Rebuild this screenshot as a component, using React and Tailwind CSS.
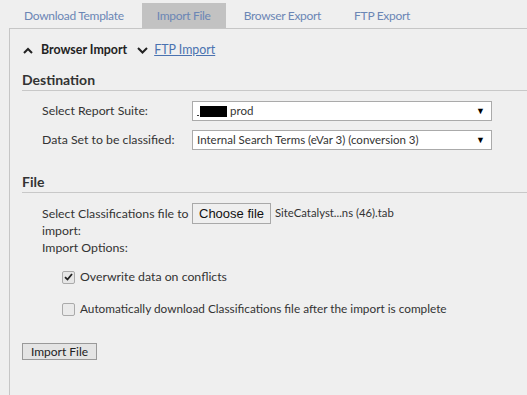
export default function App() {
  const font = { fontFamily: 'Lato, "Open Sans", sans-serif' }
  return (
    <div className="w-[527px] h-[395px] bg-[#efefef] overflow-hidden text-[#333]" style={font}>
      {/* tabs */}
      <div className="flex items-end h-[28px] pl-[9px] gap-[3px] text-[12px] tracking-[-0.3px] text-[#6b86b5]">
        <div className="h-[25px] px-[15px] flex items-center">Download Template</div>
        <div className="h-[25px] px-[15px] flex items-center bg-[#c2c2c2] text-[#6b86b5]">Import File</div>
        <div className="h-[25px] px-[15px] flex items-center">Browser Export</div>
        <div className="h-[25px] px-[15px] flex items-center">FTP Export</div>
      </div>

      <div className="ml-[9px] border-t border-l border-[#c6c6c6] h-[367px] pl-[12px]">
        <div className="flex items-center h-[41px] pt-[1px] text-[12.4px]">
          <svg width="10" height="7" viewBox="0 0 10 7" className="ml-[1px] mr-[8px]">
            <path d="M1 6 L5 2 L9 6" fill="none" stroke="#222" strokeWidth="2" />
          </svg>
          <span className="font-bold text-[#222]">Browser Import</span>
          <svg width="11" height="7" viewBox="0 0 11 7" className="ml-[10px] mr-[6px]">
            <path d="M1 1 L5.5 5.5 L10 1" fill="none" stroke="#222" strokeWidth="2" />
          </svg>
          <span className="underline text-[#4a72b0]">FTP Import</span>
        </div>

        <div className="text-[14px] font-bold text-[#333] h-[19px] leading-[19px]">Destination</div>
        <div className="border-b border-[#c8c8c8] mt-[1px]" />

        <div className="pl-[20px] text-[12.3px]">
          <div className="flex items-center mt-[10px] h-[20px]">
            <div className="w-[150px]">Select Report Suite:</div>
            <div className="w-[300px] h-[20px] border border-[#aaa] bg-white flex items-center pl-[4px] pr-[6px] text-[11.5px]">
              <span className="w-[2px] h-[1px] bg-[#333] self-end mb-[4px]" />
              <span className="w-[27px] h-[11px] bg-black ml-[1px] mr-[3px]" />
              <span>prod</span>
              <span className="ml-auto text-[9px] text-black">▼</span>
            </div>
          </div>
          <div className="flex items-center mt-[9px] h-[20px]">
            <div className="w-[150px]">Data Set to be classified:</div>
            <div className="w-[300px] h-[20px] border border-[#aaa] bg-white flex items-center pl-[4px] pr-[6px] text-[11.5px]">
              <span>Internal Search Terms (eVar 3) (conversion 3)</span>
              <span className="ml-auto text-[9px] text-black">▼</span>
            </div>
          </div>
        </div>

        <div className="text-[14px] font-bold text-[#333] h-[19px] leading-[19px] mt-[22px]">File</div>
        <div className="border-b border-[#c8c8c8] mt-[1px]" />

        <div className="pl-[20px] text-[12.3px]">
          <div className="flex mt-[10px]">
            <div className="w-[150px] leading-[17px] pt-[2px]">Select Classifications file to import:</div>
            <div className="flex items-start">
              <button className="h-[21px] px-[6px] border border-[#a9a9a9] bg-[#efefef] text-[13px] text-[#111]" style={{ fontFamily: '"Liberation Sans", Arial, sans-serif' }}>Choose file</button>
              <span className="ml-[4px] text-[11.3px] leading-[20px]">SiteCatalyst...ns (46).tab</span>
            </div>
          </div>
          <div className="leading-[17px]">Import Options:</div>

          <div className="pl-[20px] mt-[14px]">
            <label className="flex items-center h-[14px]">
              <span className="w-[13px] h-[13px] border border-[#aaa] rounded-[2px] bg-[#e6e6e6] flex items-center justify-center">
                <svg width="9" height="8" viewBox="0 0 9 8"><path d="M1 4.2 L3.5 6.5 L8 1" fill="none" stroke="#222" strokeWidth="1.8" /></svg>
              </span>
              <span className="ml-[5px]">Overwrite data on conflicts</span>
            </label>
            <label className="flex items-center h-[14px] mt-[18px]">
              <span className="w-[13px] h-[13px] border border-[#aaa] rounded-[2px] bg-[#eaeaea]" />
              <span className="ml-[5px] text-[11.8px]">Automatically download Classifications file after the import is complete</span>
            </label>
          </div>
        </div>

        <button className="mt-[27px] w-[75px] h-[17px] border border-[#999] bg-[#e4e4e4] text-[12px] leading-[15px] text-[#222]">Import File</button>
      </div>
    </div>
  )
}
